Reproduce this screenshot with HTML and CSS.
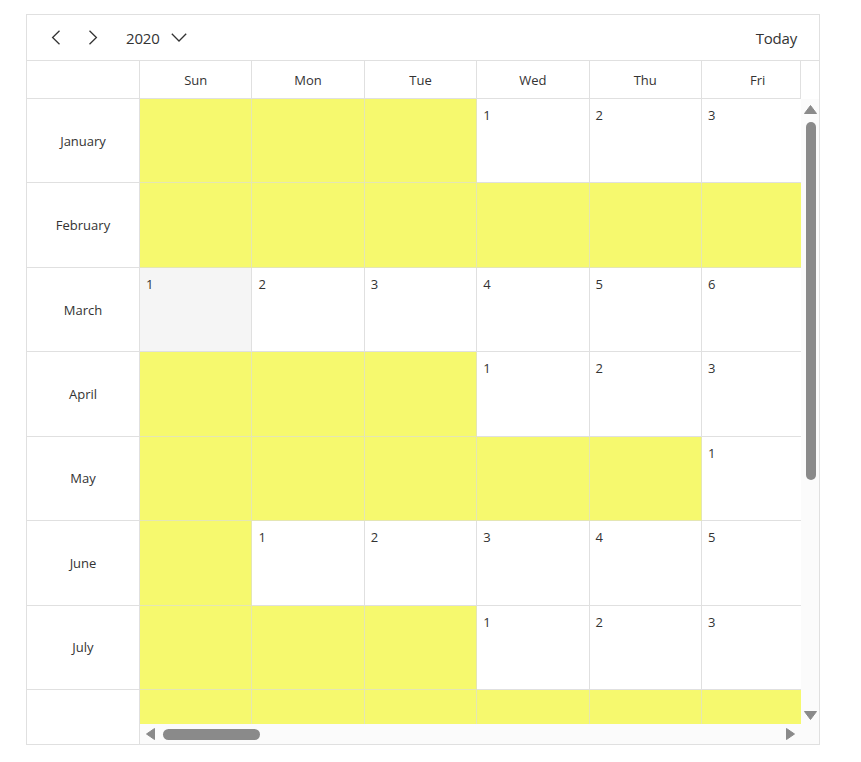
FILE: index.html
```html
<!DOCTYPE html>
<html lang="en">
<head>
<meta charset="utf-8">
<title>Year Timeline</title>
<link rel="stylesheet" href="styles.css">
</head>
<body>
<div class="cal">
  <div class="toolbar">
    <button class="nav" aria-label="Previous">
      <svg width="10" height="15" viewBox="0 0 10 15"><path d="M8.5 0.8 L1.6 7.5 L8.5 14.2" fill="none" stroke="#333" stroke-width="1.3"/></svg>
    </button>
    <button class="nav" aria-label="Next">
      <svg width="10" height="15" viewBox="0 0 10 15"><path d="M1.5 0.8 L8.4 7.5 L1.5 14.2" fill="none" stroke="#333" stroke-width="1.3"/></svg>
    </button>
    <div class="year">2020
      <svg width="16" height="9" viewBox="0 0 16 9"><path d="M0.8 0.8 L8 8 L15.2 0.8" fill="none" stroke="#333" stroke-width="1.3"/></svg>
    </div>
    <div class="spacer"></div>
    <div class="today">Today</div>
  </div>
  <div class="grid">
    <div class="corner"></div>
    <div class="col-heads">
      <div class="heads-row">
        <div class="head">Sun</div><div class="head">Mon</div><div class="head">Tue</div><div class="head">Wed</div><div class="head">Thu</div><div class="head">Fri</div>
      </div>
    </div>
    <div class="blank"></div>
    <div class="months">
      <div class="month">January</div>
      <div class="month">February</div>
      <div class="month">March</div>
      <div class="month">April</div>
      <div class="month">May</div>
      <div class="month">June</div>
      <div class="month">July</div>
      <div class="month"></div>
    </div>
    <div class="days">
      <div class="days-grid">
        <div class="d off"></div><div class="d off"></div><div class="d off"></div><div class="d">1</div><div class="d">2</div><div class="d">3</div>
        <div class="d off"></div><div class="d off"></div><div class="d off"></div><div class="d off"></div><div class="d off"></div><div class="d off"></div>
        <div class="d sel">1</div><div class="d">2</div><div class="d">3</div><div class="d">4</div><div class="d">5</div><div class="d">6</div>
        <div class="d off"></div><div class="d off"></div><div class="d off"></div><div class="d">1</div><div class="d">2</div><div class="d">3</div>
        <div class="d off"></div><div class="d off"></div><div class="d off"></div><div class="d off"></div><div class="d off"></div><div class="d">1</div>
        <div class="d off"></div><div class="d">1</div><div class="d">2</div><div class="d">3</div><div class="d">4</div><div class="d">5</div>
        <div class="d off"></div><div class="d off"></div><div class="d off"></div><div class="d">1</div><div class="d">2</div><div class="d">3</div>
        <div class="d off"></div><div class="d off"></div><div class="d off"></div><div class="d off"></div><div class="d off"></div><div class="d off"></div>
      </div>
    </div>
    <div class="vscroll">
      <svg class="arrow" width="13" height="9" viewBox="0 0 13 9"><path d="M6.5 0.5 L12.5 8.5 L0.5 8.5 Z" fill="#8a8a8a" stroke="#8a8a8a" stroke-width="1" stroke-linejoin="round"/></svg>
      <div class="vthumb"></div>
      <div class="spacer"></div>
      <svg class="arrow" width="13" height="9" viewBox="0 0 13 9"><path d="M6.5 8.5 L12.5 0.5 L0.5 0.5 Z" fill="#8a8a8a" stroke="#8a8a8a" stroke-width="1" stroke-linejoin="round"/></svg>
    </div>
    <div class="mblank"></div>
    <div class="hscroll">
      <svg class="arrow" width="9" height="12" viewBox="0 0 9 12"><path d="M0.5 6 L8.5 0.5 L8.5 11.5 Z" fill="#8a8a8a" stroke="#8a8a8a" stroke-width="1" stroke-linejoin="round"/></svg>
      <div class="hthumb"></div>
      <div class="spacer"></div>
      <svg class="arrow" width="9" height="12" viewBox="0 0 9 12"><path d="M8.5 6 L0.5 0.5 L0.5 11.5 Z" fill="#8a8a8a" stroke="#8a8a8a" stroke-width="1" stroke-linejoin="round"/></svg>
    </div>
    <div class="corner2"></div>
  </div>
</div>
</body>
</html>
```
FILE: styles.css
```css
* { box-sizing: border-box; }
html, body { margin: 0; padding: 0; background: #fff; }
body {
  font-family: "Open Sans", "Noto Sans", "Liberation Sans", sans-serif;
  color: #333;
}
.cal {
  margin: 14px 0 0 26px;
  width: 794px;
  height: 731px;
  border: 1px solid #e0e0e0;
  background: #fff;
}
.toolbar {
  height: 46px;
  border-bottom: 1px solid #e0e0e0;
  display: flex;
  align-items: center;
  padding: 0 22px 0 14px;
}
.nav {
  width: 30px;
  height: 30px;
  border: 0;
  background: transparent;
  padding: 0;
  display: flex;
  align-items: center;
  justify-content: center;
  margin-right: 7px;
}
.year {
  margin-left: 11px;
  font-size: 15px;
  display: flex;
  align-items: center;
  gap: 11px;
  letter-spacing: -0.2px;
}
.spacer { flex: 1; }
.today { font-size: 15px; letter-spacing: -0.2px; }

.grid {
  display: grid;
  grid-template-columns: 113px 661px 18px;
  grid-template-rows: 38px 625px 20px;
}
.corner {
  border-right: 1px solid #e0e0e0;
  border-bottom: 1px solid #e0e0e0;
}
.col-heads {
  overflow: hidden;
  border-right: 1px solid #e0e0e0;
  border-bottom: 1px solid #e0e0e0;
}
.heads-row {
  display: grid;
  grid-template-columns: repeat(6, 112.4px);
  height: 100%;
}
.head {
  border-right: 1px solid #e0e0e0;
  display: flex;
  align-items: center;
  justify-content: center;
  font-size: 13px;
}
.months {
  overflow: hidden;
  border-right: 1px solid #e0e0e0;
}
.mblank {
  border-right: 1px solid #e0e0e0;
}
.month {
  height: 84.43px;
  border-bottom: 1px solid #e0e0e0;
  display: flex;
  align-items: center;
  justify-content: center;
  font-size: 13px;
}
.days {
  overflow: hidden;
}
.days-grid {
  display: grid;
  grid-template-columns: repeat(6, 112.4px);
  grid-auto-rows: 84.43px;
}
.d {
  border-right: 1px solid #e0e0e0;
  border-bottom: 1px solid #e0e0e0;
  padding: 7px 0 0 6px;
  font-size: 13px;
  background: #fff;
}
.d.off {
  background: #f6f96e;
  border-color: #e4e6b4;
}
.d.sel { background: #f5f5f5; }

.vscroll {
  background: #fbfbfb;
  display: flex;
  flex-direction: column;
  align-items: center;
  padding: 6px 0 4px 1px;
}
.vthumb {
  width: 10px;
  height: 358px;
  margin-top: 8px;
  border-radius: 5px;
  background: #8a8a8a;
}
.hscroll {
  background: #fbfbfb;
  display: flex;
  align-items: center;
  padding: 0 6px;
}
.hthumb {
  width: 97px;
  height: 11px;
  margin-left: 8px;
  border-radius: 6px;
  background: #8a8a8a;
}
.corner2 { background: #fbfbfb; }
.arrow { display: block; flex: none; }
```
